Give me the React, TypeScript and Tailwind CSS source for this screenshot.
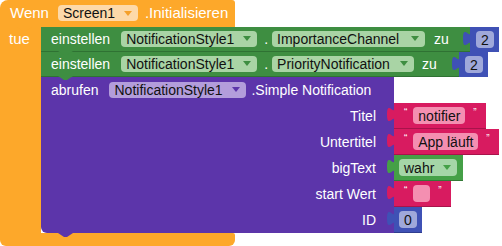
import type { ReactNode } from "react";

const Arrow = ({ color }: { color: string }) => (
  <svg width="8" height="5" viewBox="0 0 8 5" className="shrink-0">
    <path d="M0 0h8L4 5z" fill={color} />
  </svg>
);

const Drop = ({ text, cls, arrow }: { text: string; cls: string; arrow: string }) => (
  <span
    className={`inline-flex h-[16px] shrink-0 items-center justify-between rounded-[4px] pl-[5px] pr-[6px] text-[14px] leading-none text-[#111] ${cls}`}
  >
    {text}
    <Arrow color={arrow} />
  </span>
);

// output tab sticking out on the left of a value block
const Tab = ({ color }: { color: string }) => (
  <svg width="9" height="25" viewBox="0 0 9 25" className="absolute left-[-8px] top-0">
    <path d="M9 4c0 10-8-8-8 7.5s8-2.5 8 7.5z" fill={color} />
  </svg>
);

// next-statement bump under a block
const Notch = ({ color }: { color: string }) => (
  <svg width="15" height="4" viewBox="0 0 15 4" className="absolute bottom-[-4px] left-[17px] z-10">
    <path d="M0 0l6 4h3l6-4z" fill={color} />
  </svg>
);

const Quote = ({ children }: { children: ReactNode }) => (
  <span className="self-start mt-[5px] text-[10px] leading-none text-white">{children}</span>
);

const TextBlock = ({ text, pill }: { text: string; pill: string }) => (
  <div className="relative flex h-[26px] items-center border-b border-[#a8134b] bg-[#d81b60] pl-[10px] pr-[9px]">
    <Tab color="#d81b60" />
    <Quote>“</Quote>
    <span
      className={`ml-[6px] mr-[8px] flex h-[17px] items-center justify-center rounded-[4px] bg-[#f48fb1] text-[14px] leading-none text-[#111] ${pill}`}
    >
      {text}
    </span>
    <Quote>”</Quote>
  </div>
);

const NumBlock = ({ n, cls }: { n: string; cls: string }) => (
  <div className={`relative flex h-[25px] items-center bg-[#3f51b5] ${cls}`}>
    <Tab color="#3f51b5" />
    <span className="flex h-[17px] w-[18px] items-center justify-center rounded-[4px] bg-[#9fa8da] text-[14px] leading-none text-[#111]">
      {n}
    </span>
  </div>
);

const Input = ({ label, children }: { label: string; children: ReactNode }) => (
  <div className="flex">
    <div className="flex h-[26px] w-[353px] items-center justify-end bg-[#5c35aa] pr-[18px] text-[14px] text-white">
      {label}
    </div>
    {children}
  </div>
);

export default function App() {
  return (
    <div className="h-[246px] w-[502px] overflow-hidden bg-white font-['Liberation_Sans',Arial,sans-serif]">
      {/* event header */}
      <div className="relative z-10 flex h-[27px] w-[235px] items-center rounded-tl-[8px] rounded-tr-[3px] bg-[#fda82a] pl-[10px] text-[15px] text-white">
        <span>Wenn</span>
        <span className="ml-[9px]">
          <Drop text="Screen1" cls="w-[80px] bg-[#fdd9a9]" arrow="#f5a02a" />
        </span>
        <span className="ml-[7px]">.Initialisieren</span>
        <Notch color="#fda82a" />
      </div>

      <div className="flex">
        <div className="w-[41px] shrink-0 bg-[#fda82a] pl-[9px] pt-[1px] text-[15px] text-white">tue</div>

        <div className="flex flex-col">
          {/* setter 1 */}
          <div className="flex">
            <div className="relative flex h-[25px] w-[429px] items-center border-b border-[#2f7233] bg-[#3e8e41] pl-[10px] text-[14px] text-white">
              <span>einstellen</span>
              <span className="ml-[11px]">
                <Drop text="NotificationStyle1" cls="w-[136px] bg-[#a9d4a5]" arrow="#3e8e41" />
              </span>
              <span className="ml-[7px]">.</span>
              <span className="ml-[4px]">
                <Drop text="ImportanceChannel" cls="w-[153px] bg-[#a9d4a5]" arrow="#3e8e41" />
              </span>
              <span className="ml-[9px]">zu</span>
              <Notch color="#3e8e41" />
            </div>
            <NumBlock n="2" cls="w-[29px] pl-[6px]" />
          </div>

          {/* setter 2 */}
          <div className="flex">
            <div className="relative flex h-[25px] w-[418px] items-center border-b border-[#2f7233] bg-[#3e8e41] pl-[10px] text-[14px] text-white">
              <span>einstellen</span>
              <span className="ml-[11px]">
                <Drop text="NotificationStyle1" cls="w-[136px] bg-[#a9d4a5]" arrow="#3e8e41" />
              </span>
              <span className="ml-[7px]">.</span>
              <span className="ml-[4px]">
                <Drop text="PriorityNotification" cls="w-[142px] bg-[#a9d4a5]" arrow="#3e8e41" />
              </span>
              <span className="ml-[8px]">zu</span>
              <Notch color="#3e8e41" />
            </div>
            <NumBlock n="2" cls="w-[29px] pl-[6px]" />
          </div>

          {/* method call */}
          <div className="relative flex flex-col">
            <div className="flex h-[26px] w-[353px] items-center bg-[#5c35aa] pl-[10px] text-[14px] text-white">
              <span>abrufen</span>
              <span className="ml-[11px]">
                <Drop text="NotificationStyle1" cls="w-[137px] bg-[#b39ddb]" arrow="#5c35aa" />
              </span>
              <span className="ml-[5px]">.Simple Notification</span>
            </div>
            <Input label="Titel">
              <TextBlock text="notifier" pill="w-[52px]" />
            </Input>
            <Input label="Untertitel">
              <TextBlock text="App läuft" pill="w-[65px]" />
            </Input>
            <Input label="bigText">
              <div className="relative flex h-[26px] w-[69px] items-center border-b border-[#337a36] bg-[#45a047] pl-[5px]">
                <Tab color="#45a047" />
                <Drop text="wahr" cls="w-[58px] h-[17px] bg-[#a5d6a7]" arrow="#45a047" />
              </div>
            </Input>
            <Input label="start Wert">
              <TextBlock text="" pill="w-[17px]" />
            </Input>
            <div className="flex">
              <div className="flex h-[26px] w-[353px] items-center justify-end rounded-bl-[6px] bg-[#5c35aa] pr-[18px] text-[14px] text-white">
                ID
              </div>
              <NumBlock n="0" cls="w-[28px] pl-[5px] h-[26px] border-b border-[#2f3d8f]" />
            </div>
            <Notch color="#5c35aa" />
          </div>
        </div>
      </div>

      <div className="h-[13px] w-[235px] rounded-b-[6px] rounded-tr-[2px] bg-[#fda82a]" />
    </div>
  );
}
